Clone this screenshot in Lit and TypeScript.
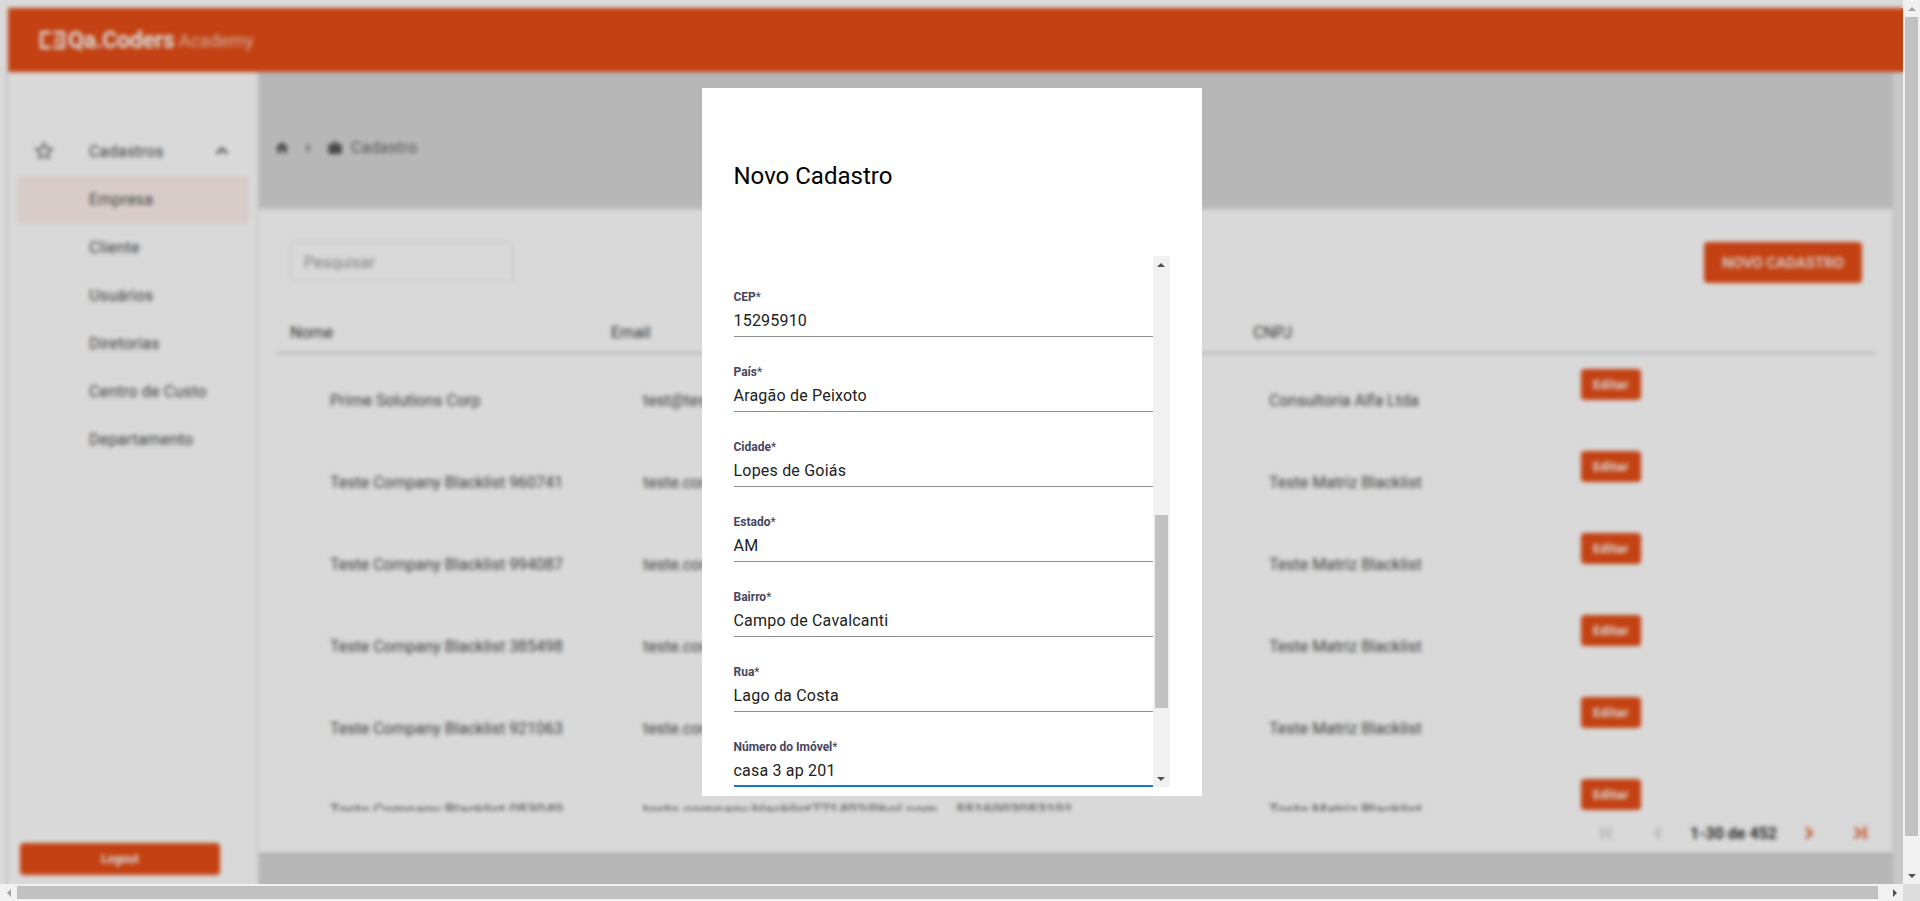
import {html, css, svg, LitElement} from 'lit';
import {customElement} from 'lit/decorators.js';

const icon = (d: string, size = 24) => html`
  <svg class="icon" width=${size} height=${size} viewBox="0 0 24 24" fill="currentColor">${svg`<path d=${d}></path>`}</svg>
`;

const PATHS = {
  star: 'M22 9.24l-7.19-.62L12 2 9.19 8.63 2 9.24l5.46 4.73L5.82 21 12 17.27 18.18 21l-1.63-7.03L22 9.24zM12 15.4l-3.76 2.27 1-4.28-3.32-2.88 4.38-.38L12 6.1l1.71 4.04 4.38.38-3.32 2.88 1 4.28L12 15.4z',
  up: 'M12 8l-6 6 1.41 1.41L12 10.83l4.59 4.58L18 14z',
  home: 'M10 20v-6h4v6h5v-8h3L12 3 2 12h3v8z',
  right: 'M10 6L8.59 7.41 13.17 12l-4.58 4.59L10 18l6-6z',
  work: 'M20 6h-4V4c0-1.11-.89-2-2-2h-4c-1.11 0-2 .89-2 2v2H4c-1.11 0-1.99.89-1.99 2L2 19c0 1.11.89 2 2 2h16c1.11 0 2-.89 2-2V8c0-1.11-.89-2-2-2zm-6 0h-4V4h4v2z',
  first: 'M16.41 16.59L11.82 12l4.59-4.59L15 6l-6 6 6 6zM5 6h2v12H5z',
  left: 'M15.41 7.41L14 6l-6 6 6 6 1.41-1.41L10.83 12z',
  last: 'M7.59 7.41L12.18 12l-4.59 4.59L9 18l6-6-6-6zM17 6h2v12h-2z',
};

const MENU = ['Cliente', 'Usuários', 'Diretorias', 'Centro de Custo', 'Departamento'];

const ROWS = [
  ['Prime Solutions Corp', 'test@teste.com', '5516993053191', 'Consultoria Alfa Ltda'],
  ['Teste Company Blacklist 960741', 'teste.company.blacklist960741@bol.com', '5516993053191', 'Teste Matriz Blacklist'],
  ['Teste Company Blacklist 994087', 'teste.company.blacklist994087@bol.com', '5516993053191', 'Teste Matriz Blacklist'],
  ['Teste Company Blacklist 385498', 'teste.company.blacklist385498@bol.com', '5516993053191', 'Teste Matriz Blacklist'],
  ['Teste Company Blacklist 921063', 'teste.company.blacklist921063@bol.com', '5516993053191', 'Teste Matriz Blacklist'],
  ['Teste Company Blacklist 053049', 'teste.company.blacklist771402@bol.com', '5516993053191', 'Teste Matriz Blacklist'],
];

const FIELDS = [
  ['CEP', '15295910'],
  ['País', 'Aragão de Peixoto'],
  ['Cidade', 'Lopes de Goiás'],
  ['Estado', 'AM'],
  ['Bairro', 'Campo de Cavalcanti'],
  ['Rua', 'Lago da Costa'],
  ['Número do Imóvel', 'casa 3 ap 201'],
];

@customElement('app-root')
export class AppRoot extends LitElement {
  static styles = css`
    :host {
      display: block;
      width: 1920px;
      height: 901px;
      overflow: hidden;
      font-family: Roboto, "Liberation Sans", sans-serif;
      --orange: #e64d16;
    }

    .frame {
      display: grid;
      grid-template-columns: 1903px 17px;
      grid-template-rows: 884px 17px;
      width: 1920px;
      height: 901px;
    }

    .viewport {
      position: relative;
      overflow: hidden;
      background: #fff;
    }

    .page {
      width: 1930px;
      height: 910px;
      padding: 8px 0 0 6px;
      box-sizing: border-box;
      display: flex;
      flex-direction: column;
    }

    .header {
      flex: none;
      height: 64px;
      margin-left: 2px;
      background: var(--orange);
      display: flex;
      align-items: center;
      padding-left: 32px;
      color: #fff;
    }

    .logo-mark { margin-right: 3px; }
    .logo-name { font-size: 23px; font-weight: 700; letter-spacing: -0.2px; }
    .logo-sub { font-size: 18px; font-weight: 400; margin-left: 4px; color: rgba(255, 255, 255, 0.7); }

    .shell {
      flex: 1;
      display: flex;
      min-height: 0;
      border-left: 2px solid #e6e6e6;
    }

    .sidebar {
      flex: none;
      width: 250px;
      box-sizing: border-box;
      height: 812px;
      padding-top: 55px;
      display: flex;
      flex-direction: column;
      color: #4c4c4c;
      font-size: 16px;
      letter-spacing: 0.2px;
    }

    .menu-item {
      height: 48px;
      display: flex;
      align-items: center;
      padding-left: 81px;
      flex: none;
    }

    .menu-head { padding-left: 24px; }
    .star { display: flex; margin-right: 33px; color: #666; }
    .caret { display: flex; margin-left: auto; margin-right: 24px; color: #333; }

    .menu-selected {
      margin: 1px 9px 0;
      height: 47px;
      padding-left: 72px;
      border-radius: 4px;
      background: #fdf0ec;
    }

    .logout {
      margin: auto 0 9px 12px;
      width: 200px;
      height: 32px;
      border: 0;
      border-radius: 4px;
      background: var(--orange);
      color: #fff;
      font: 700 12px Roboto, sans-serif;
    }

    .main {
      flex: none;
      width: 1635px;
      display: flex;
      flex-direction: column;
    }

    .crumbs {
      flex: none;
      height: 137px;
      box-sizing: border-box;
      background: #d8d8d8;
      display: flex;
      align-items: center;
      padding: 14px 0 0 16px;
      color: #666;
      font-size: 16px;
      letter-spacing: 0.2px;
    }

    .crumbs .icon { display: block; color: #555; }
    .crumbs .sep { margin: 0 11px 0 10px; color: #777; }
    .crumbs .bag { margin-right: 8px; }

    .content {
      flex: none;
      height: 644px;
      background: #fff;
      box-sizing: border-box;
      padding: 33px 16px 0 17px;
      display: flex;
      flex-direction: column;
      box-shadow: 0 1px 3px rgba(0, 0, 0, 0.2);
      position: relative;
    }

    .toolbar {
      flex: none;
      height: 41px;
      display: flex;
      justify-content: space-between;
      padding: 0 15px;
    }

    .search {
      width: 223px;
      height: 40px;
      box-sizing: border-box;
      border: 1px solid #e2e2e2;
      border-radius: 4px;
      padding-left: 13px;
      display: flex;
      align-items: center;
      color: #9a9a9a;
      font-size: 16px;
    }

    .new-btn {
      width: 158px;
      height: 41px;
      border: 0;
      border-radius: 4px;
      background: var(--orange);
      color: #fff;
      font: 500 15px Roboto, sans-serif;
      text-transform: uppercase;
    }

    .thead {
      flex: none;
      height: 71px;
      padding: 30px 0 0 15px;
      box-sizing: border-box;
      border-bottom: 2px solid #d4d4d4;
      display: grid;
      grid-template-columns: repeat(4, 321px);
      align-items: center;
      color: #3c3c3c;
      font-size: 16px;
    }

    .tbody {
      flex: none;
      height: 457px;
      overflow: hidden;
    }

    .row {
      height: 82px;
      padding-left: 55px;
      display: grid;
      grid-template-columns: repeat(5, 313px);
      color: #4c4c4c;
      font-size: 16px;
      line-height: 24px;
    }

    .row span {
      padding-top: 35px;
      white-space: nowrap;
    }

    .edit {
      width: 60px;
      height: 31px;
      margin: 15px 0 0 -1px;
      border: 0;
      border-radius: 4px;
      background: var(--orange);
      color: #fff;
      font: 700 13px Roboto, sans-serif;
      letter-spacing: 0.3px;
    }

    .pager {
      flex: 1;
      display: flex;
      align-items: center;
      justify-content: flex-end;
      gap: 26px;
      padding: 2px 6px 0 0;
    }

    .pager span { display: flex; }
    .pager .off { color: #c6c6c6; }
    .pager .on { color: #e4663f; stroke: currentColor; stroke-width: 1px; }
    .pager-text { margin: 0 -6px; font-size: 16px; font-weight: 700; color: #333; }

    .footer-bar { flex: 1; background: #d8d8d8; }

    .side-band {
      flex: none;
      width: 40px;
      background: #ececec;
    }

    .scrim {
      position: absolute;
      inset: 0;
      display: flex;
      align-items: center;
      justify-content: center;
      background: rgba(0, 0, 0, 0.15);
      backdrop-filter: blur(2px);
    }

    .modal {
      width: 500px;
      height: 708px;
      box-sizing: border-box;
      background: #fff;
      padding: 73px 32px 9px;
      display: flex;
      flex-direction: column;
    }

    .modal h2 {
      margin: 0 0 65px;
      font-size: 24px;
      line-height: 30px;
      font-weight: 400;
      color: #000;
    }

    .form {
      flex: 1;
      min-height: 0;
      display: flex;
    }

    .fields {
      flex: 1;
      padding-top: 6px;
    }

    .field {
      height: 75px;
      box-sizing: border-box;
      display: flex;
      flex-direction: column;
      justify-content: flex-end;
      border-bottom: 1px solid #8e8e8e;
      padding-bottom: 3px;
    }

    .field.focused {
      border-bottom: 2px solid #1976d2;
      padding-bottom: 2px;
    }

    .field label {
      font-size: 12px;
      line-height: 16px;
      font-weight: 700;
      color: #47465e;
      margin-bottom: 4px;
    }

    .field label i { font-style: normal; font-weight: 400; }

    .value {
      font-size: 16px;
      line-height: 24px;
      letter-spacing: 0.2px;
      color: #212121;
    }

    .bar {
      flex: none;
      background: #f1f1f1;
      display: flex;
      align-items: center;
    }

    .bar-y {
      width: 17px;
      flex-direction: column;
    }

    .bar-x {
      height: 17px;
    }

    .arrow { flex: none; width: 17px; height: 17px; display: flex; align-items: center; justify-content: center; }
    .tri { width: 0; height: 0; border: 4px solid transparent; }
    .tri-up { border-bottom-color: #505050; border-top-width: 0; }
    .tri-down { border-top-color: #505050; border-bottom-width: 0; }
    .tri-left { border-right-color: #a3a3a3; border-left-width: 0; }
    .tri-right { border-left-color: #505050; border-right-width: 0; }
    .tri-up.dim { border-bottom-color: #a3a3a3; }

    .thumb { background: #c1c1c1; flex: none; }
    .form .thumb { width: 13px; height: 193px; margin-top: 242px; }
    .form .arrow:last-child { margin-top: auto; }
    .page-y .thumb { width: 13px; height: 819px; }
    .page-y .arrow:last-child { margin-top: auto; }
    .page-x .thumb { height: 13px; width: 1861px; }
    .page-x .arrow:last-child { margin-left: auto; }
    .corner { background: #dcdcdc; }
  `;

  private renderLogo() {
    return html`
      <svg class="logo-mark" width="25" height="18" viewBox="0 0 25 18" fill="none" stroke="#fff" stroke-width="3">
        <path d="M11 1.5H1.5V16.5H11"></path>
        <path d="M14 1.5H23.5V16.5H14"></path>
        <path d="M14 11.5H18.5V6.5H15" stroke-width="2"></path>
      </svg>
      <span class="logo-name">Qa.Coders</span>
      <span class="logo-sub">Academy</span>
    `;
  }

  private renderSidebar() {
    return html`
      <nav class="sidebar">
        <div class="menu-item menu-head">
          <span class="star">${icon(PATHS.star)}</span>
          <span>Cadastros</span>
          <span class="caret">${icon(PATHS.up)}</span>
        </div>
        <div class="menu-item menu-selected">Empresa</div>
        ${MENU.map(item => html`<div class="menu-item">${item}</div>`)}
        <button class="logout">Logout</button>
      </nav>
    `;
  }

  private renderTable() {
    return html`
      <div class="thead">
        <span>Nome</span><span>Email</span><span>Telefone</span><span>CNPJ</span>
      </div>
      <div class="tbody">
        ${ROWS.map(row => html`
          <div class="row">
            ${row.map(cell => html`<span>${cell}</span>`)}
            <div><button class="edit">Editar</button></div>
          </div>
        `)}
      </div>
      <div class="pager">
        <span class="off">${icon(PATHS.first)}</span>
        <span class="off">${icon(PATHS.left)}</span>
        <span class="pager-text">1-30 de 452</span>
        <span class="on">${icon(PATHS.right)}</span>
        <span class="on">${icon(PATHS.last)}</span>
      </div>
    `;
  }

  private renderModal() {
    return html`
      <div class="scrim">
        <div class="modal">
          <h2>Novo Cadastro</h2>
          <div class="form">
            <div class="fields">
              ${FIELDS.map(([label, value], i) => html`
                <div class="field ${i === FIELDS.length - 1 ? 'focused' : ''}">
                  <label>${label}<i>*</i></label>
                  <div class="value">${value}</div>
                </div>
              `)}
            </div>
            <div class="bar bar-y">
              <div class="arrow"><div class="tri tri-up"></div></div>
              <div class="thumb"></div>
              <div class="arrow"><div class="tri tri-down"></div></div>
            </div>
          </div>
        </div>
      </div>
    `;
  }

  render() {
    return html`
      <div class="frame">
        <div class="viewport">
          <div class="page">
            <header class="header">${this.renderLogo()}</header>
            <div class="shell">
              ${this.renderSidebar()}
              <main class="main">
                <div class="crumbs">
                  ${icon(PATHS.home, 16)}
                  <span class="sep">${icon(PATHS.right, 16)}</span>
                  <span class="bag">${icon(PATHS.work, 16)}</span>
                  <span>Cadastro</span>
                </div>
                <section class="content">
                  <div class="toolbar">
                    <div class="search">Pesquisar</div>
                    <button class="new-btn">Novo Cadastro</button>
                  </div>
                  ${this.renderTable()}
                </section>
                <div class="footer-bar"></div>
              </main>
              <div class="side-band"></div>
            </div>
          </div>
          ${this.renderModal()}
        </div>
        <div class="bar bar-y page-y">
          <div class="arrow"><div class="tri tri-up dim"></div></div>
          <div class="thumb"></div>
          <div class="arrow"><div class="tri tri-down"></div></div>
        </div>
        <div class="bar bar-x page-x">
          <div class="arrow"><div class="tri tri-left"></div></div>
          <div class="thumb"></div>
          <div class="arrow"><div class="tri tri-right"></div></div>
        </div>
        <div class="corner"></div>
      </div>
    `;
  }
}

declare global {
  interface HTMLElementTagNameMap {
    'app-root': AppRoot
  }
}
